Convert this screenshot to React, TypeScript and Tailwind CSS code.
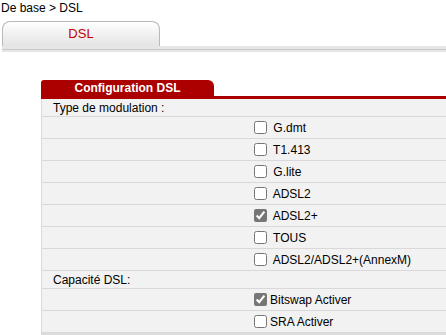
import React from "react";

type Option = { label: string; checked?: boolean; spaced?: boolean };

const MODULATIONS: Option[] = [
  { label: "G.dmt", spaced: true },
  { label: "T1.413", spaced: true },
  { label: "G.lite", spaced: true },
  { label: "ADSL2", spaced: true },
  { label: "ADSL2+", checked: true, spaced: true },
  { label: "TOUS", spaced: true },
  { label: "ADSL2/ADSL2+(AnnexM)", spaced: true },
];

const CAPACITY: Option[] = [
  { label: "Bitswap Activer", checked: true },
  { label: "SRA Activer" },
];

function LabelRow({ text }: { text: string }) {
  return (
    <div className="h-[18px] flex items-center pl-[11px] border-b border-[#d9d9d9]">
      {text}
    </div>
  );
}

function OptionRow({ opt }: { opt: Option }) {
  return (
    <div className="h-[22px] grid grid-cols-[208px_1fr] border-b border-[#d9d9d9]">
      <div />
      <label className="flex items-center whitespace-pre">
        <input
          type="checkbox"
          defaultChecked={opt.checked}
          className="ml-[4px] mr-[3px] w-[13px] h-[13px] accent-[#767676]"
        />
        {opt.spaced ? " " + opt.label : opt.label}
      </label>
    </div>
  );
}

export default function App() {
  return (
    <div className="w-[446px] h-[335px] overflow-hidden bg-white text-[12px] text-black font-['Liberation_Sans',Arial,sans-serif]">
      {/* breadcrumb */}
      <div className="h-[21px] pl-[1px] pt-[1px] leading-[14px]">De base &gt; DSL</div>

      {/* page tabs */}
      <div className="ml-[2px] w-[158px] h-[25px] rounded-t-[8px] border border-b-0 border-[#b8b8b8] bg-gradient-to-b from-white to-[#e4e4e4] flex items-center justify-center text-[13px] text-[#c40000]">
        DSL
      </div>
      <div className="ml-[2px] flex flex-col">
        <div className="h-[3px] bg-[#e6e6e6]" />
        <div className="h-[1px] bg-[#c9c9c9]" />
        <div className="h-[2px] bg-[#e6e6e6]" />
      </div>

      {/* config panel */}
      <div className="ml-[41px] mt-[28px]">
        <div className="flex">
          <div className="w-[173px] h-[16px] bg-[#aa0000] rounded-tl-[3px] rounded-tr-[6px] flex items-center justify-center font-bold text-white">
            Configuration DSL
          </div>
        </div>
        <div className="h-[3px] bg-[#aa0000]" />
        <div className="border-l border-[#dadada] bg-[#f2f2f2]">
          <LabelRow text="Type de modulation :" />
          {MODULATIONS.map((o) => (
            <OptionRow key={o.label} opt={o} />
          ))}
          <LabelRow text="Capacité DSL:" />
          {CAPACITY.map((o) => (
            <OptionRow key={o.label} opt={o} />
          ))}
          <div className="h-[10px] bg-[#dddddd]" />
        </div>
      </div>
    </div>
  );
}
